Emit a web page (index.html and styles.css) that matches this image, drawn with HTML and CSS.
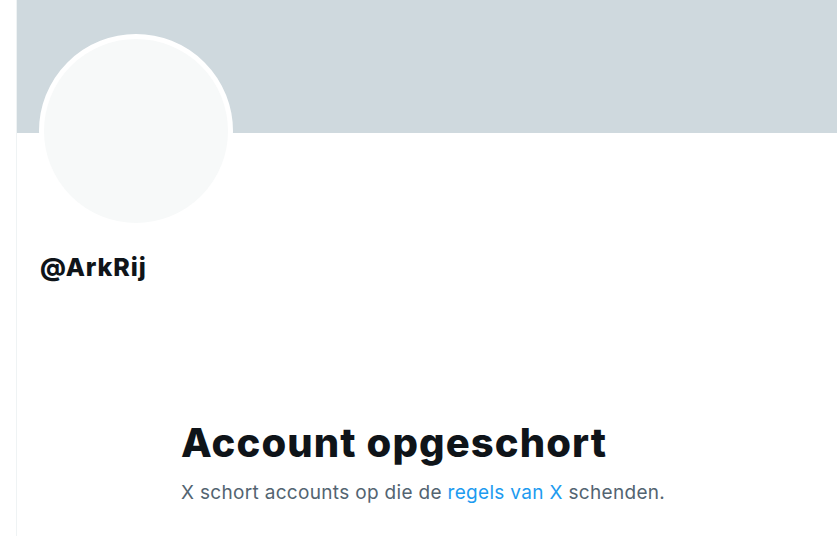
FILE: index.html
```html
<!DOCTYPE html>
<html lang="nl">
<head>
<meta charset="utf-8">
<title>@ArkRij</title>
<link rel="stylesheet" href="styles.css">
</head>
<body>
<div class="page">
  <div class="gutter"></div>
  <main class="column">
    <div class="banner"></div>
    <div class="profile">
      <div class="avatar"></div>
      <div class="handle">@ArkRij</div>
    </div>
    <section class="empty">
      <h1 class="empty-title">Account opgeschort</h1>
      <p class="empty-text">X schort accounts op die de <a class="link" href="#">regels van X</a> schenden.</p>
    </section>
  </main>
</div>
</body>
</html>
```
FILE: styles.css
```css
html, body {
  margin: 0;
  padding: 0;
  background: #ffffff;
}
body {
  font-family: Inter, "Liberation Sans", Arial, sans-serif;
  color: #0f1419;
  width: 837px;
  height: 536px;
  overflow: hidden;
}
.page {
  display: flex;
  height: 536px;
}
.gutter {
  width: 16px;
  flex: none;
}
.column {
  flex: 1;
  border-left: 1px solid #eff3f4;
  min-width: 0;
}
.banner {
  height: 133px;
  background: #cfd9de;
}
.profile {
  padding-left: 22px;
}
.avatar {
  width: 194px;
  height: 194px;
  box-sizing: border-box;
  border: 5px solid #ffffff;
  border-radius: 50%;
  background: #f7f9f9;
  margin-top: -99px;
}
.handle {
  margin-top: 24px;
  padding-left: 1px;
  font-size: 25px;
  line-height: 30px;
  font-weight: 800;
  letter-spacing: 0.9px;
}
.empty {
  padding: 137px 0 0 164px;
}
.empty-title {
  margin: 0;
  font-size: 40px;
  line-height: 48px;
  font-weight: 800;
  letter-spacing: 1.1px;
}
.empty-text {
  margin: 13px 0 0;
  font-size: 19px;
  line-height: 26px;
  color: #536471;
  letter-spacing: 0.32px;
}
.link {
  color: #1d9bf0;
  text-decoration: none;
}
```
